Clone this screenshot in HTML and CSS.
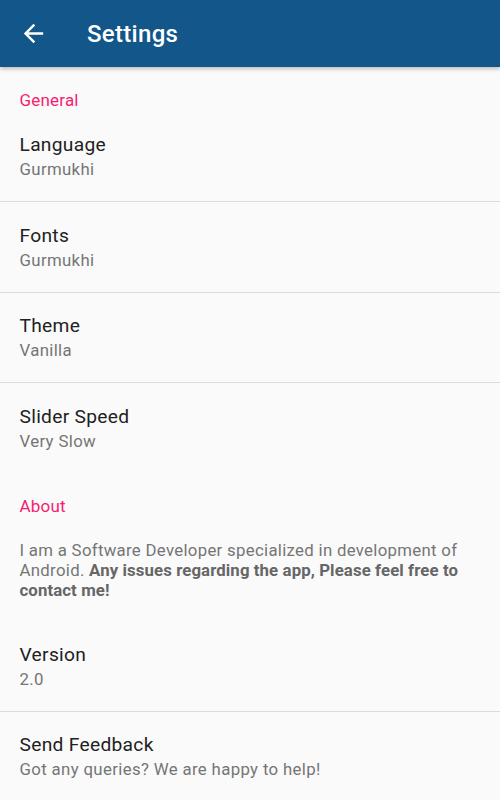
FILE: index.html
```html
<!DOCTYPE html>
<html lang="en">
<head>
  <meta charset="UTF-8">
  <meta name="viewport" content="width=device-width, initial-scale=1.0">
  <title>Settings</title>
  <link rel="stylesheet" href="styles.css">
</head>
<body>
  <!-- Toolbar -->
  <header class="toolbar">
    <button class="back-btn" aria-label="Back">
      <svg viewBox="0 0 24 24" width="29" height="29">
        <path fill="#fff" d="M20 11H7.83l5.59-5.59L12 4l-8 8 8 8 1.41-1.41L7.83 13H20v-2z"/>
      </svg>
    </button>
    <h1 class="toolbar-title">Settings</h1>
  </header>

  <main class="prefs">
    <!-- General -->
    <div class="category">General</div>
    <div class="pref">
      <div class="pref-title">Language</div>
      <div class="pref-summary">Gurmukhi</div>
    </div>
    <div class="pref">
      <div class="pref-title">Fonts</div>
      <div class="pref-summary">Gurmukhi</div>
    </div>
    <div class="pref">
      <div class="pref-title">Theme</div>
      <div class="pref-summary">Vanilla</div>
    </div>
    <div class="pref last">
      <div class="pref-title">Slider Speed</div>
      <div class="pref-summary">Very Slow</div>
    </div>

    <!-- About -->
    <div class="category">About</div>
    <p class="about-text">I am a Software Developer specialized in development of Android. <b>Any issues regarding the app, Please feel free to contact me!</b></p>
    <div class="pref">
      <div class="pref-title">Version</div>
      <div class="pref-summary">2.0</div>
    </div>
    <div class="pref last">
      <div class="pref-title">Send Feedback</div>
      <div class="pref-summary">Got any queries? We are happy to help!</div>
    </div>
  </main>
</body>
</html>
```

FILE: styles.css
```css
html, body {
  margin: 0;
  padding: 0;
  overflow: hidden;
}
body {
  font-family: Roboto, "Liberation Sans", Arial, sans-serif;
  background-color: #fafafa;
  color: #212121;
  width: 500px;
  height: 800px;
}
.toolbar {
  height: 67px;
  background-color: #12568a;
  display: flex;
  align-items: center;
  box-shadow: 0 2px 4px rgba(0, 0, 0, 0.25);
  position: relative;
  z-index: 1;
}
.back-btn {
  margin-left: 19px;
  padding: 0;
  border: none;
  background: none;
  width: 29px;
  height: 29px;
  display: flex;
}
.toolbar-title {
  margin: 0 0 0 39px;
  font-size: 24px;
  font-weight: 500;
  letter-spacing: 0.3px;
  color: #ffffff;
}
.category {
  padding: 23px 19.5px 2px;
  font-size: 17px;
  line-height: 20px;
  letter-spacing: 0.2px;
  color: #f81b72;
}
.pref {
  padding: 21.4px 19.5px 20px;
  border-bottom: 1px solid #dcdcdc;
}
.pref.last {
  border-bottom: none;
}
.pref-title {
  font-size: 19.2px;
  line-height: 24px;
  letter-spacing: 0.3px;
  color: #212121;
}
.pref-summary {
  font-size: 16.8px;
  line-height: 24px;
  letter-spacing: 0.35px;
  color: #757575;
}
.about-text {
  margin: 0;
  padding: 22px 19.5px 22px;
  font-size: 16.8px;
  line-height: 20px;
  letter-spacing: 0.3px;
  color: #757575;
}
.about-text b {
  font-weight: 700;
  letter-spacing: 0.1px;
  color: #666666;
}
```
